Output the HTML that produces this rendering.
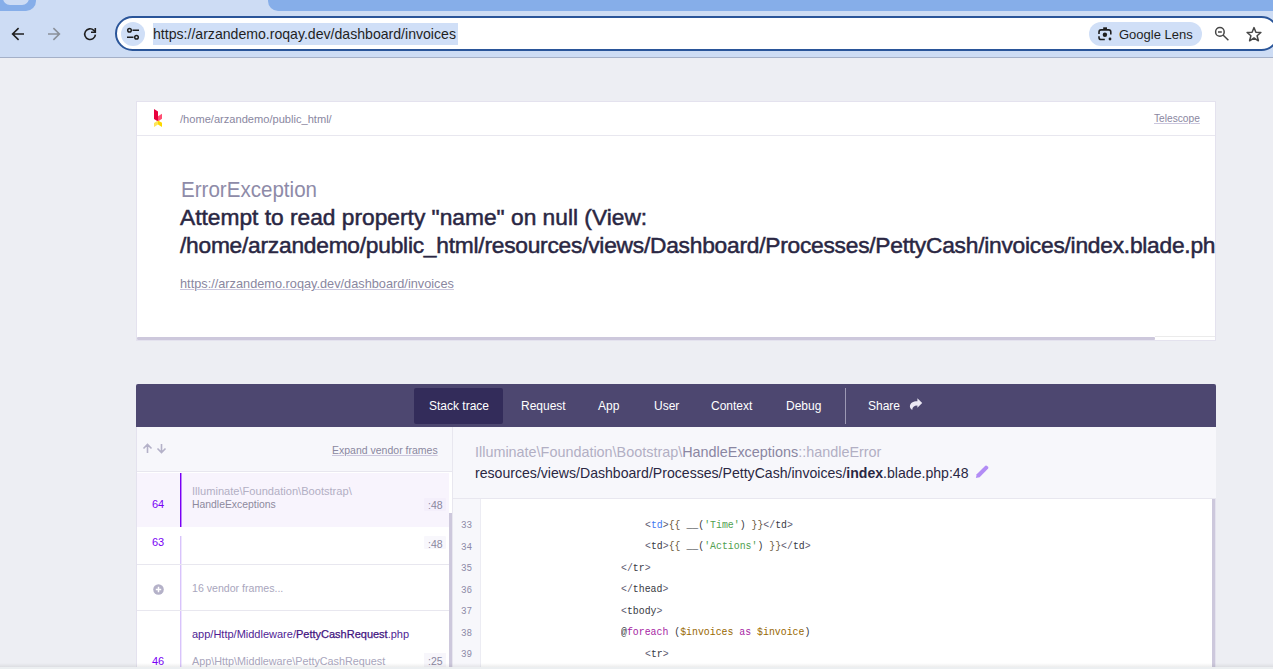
<!DOCTYPE html>
<html><head><meta charset="utf-8">
<style>
*{margin:0;padding:0;box-sizing:border-box}
html,body{width:1273px;height:669px;overflow:hidden;background:#edeef3;font-family:"Liberation Sans",sans-serif}
.a{position:absolute;white-space:pre;line-height:1}
.m{font-family:"Liberation Mono",monospace}
/* chrome */
#chrome{position:absolute;left:0;top:0;width:1273px;height:58px;background:#cddcf4;border-bottom:1px solid #a4b0c8}
.tabl{position:absolute;left:0;top:0;width:36px;height:10.7px;background:#86aee9;border-bottom-right-radius:10px}
.tabl i{position:absolute;left:3px;top:-9px;width:26px;height:14px;background:#cddcf4;border-radius:7px}
.tabr{position:absolute;left:268px;top:0;width:1010px;height:11px;background:#86aee9;border-bottom-left-radius:10px}
#omni{position:absolute;left:115px;top:16px;width:1164px;height:35px;border:2px solid #2a5599;border-radius:18px;background:#fff}
.card{position:absolute;left:136px;width:1080px;background:#fff;border:1px solid #e4e2ee}
</style></head><body>

<div id="chrome">
  <div class="tabl"><i></i></div>
  <div class="tabr"></div>
  <!-- back -->
  <svg class="a" style="left:11px;top:27px" width="14" height="14" viewBox="0 0 14 14"><path d="M13 7H1.6M7.6 1.1L1.6 7l6 5.9" fill="none" stroke="#1f1f1f" stroke-width="1.6"/></svg>
  <svg class="a" style="left:47px;top:27px" width="14" height="14" viewBox="0 0 14 14"><path d="M1 7h11.4M6.4 1.1l6 5.9-6 5.9" fill="none" stroke="#8a9099" stroke-width="1.6"/></svg>
  <svg class="a" style="left:82px;top:26px" width="16" height="16" viewBox="0 0 16 16"><path d="M13.4 8.6A5.35 5.35 0 1 1 11.78 4.32L13.1 5.8" fill="none" stroke="#1f1f1f" stroke-width="1.6"/><path d="M9 6.3H13.3V2" fill="none" stroke="#1f1f1f" stroke-width="1.6"/></svg>
  <div id="omni"></div>
  <div class="a" style="left:121px;top:22px;width:24px;height:24px;border-radius:12px;background:#d0dff7"></div>
  <svg class="a" style="left:126px;top:27px" width="14" height="14" viewBox="0 0 14 14"><g fill="none" stroke="#1f1f1f" stroke-width="1.5"><circle cx="3.5" cy="3.2" r="1.8"/><path d="M6.5 3.2H13M1 10.3h6.5"/><circle cx="10.5" cy="10.3" r="1.8"/></g></svg>
  <div class="a" style="left:153px;top:23px;width:305px;height:22px;background:#d0dff7"></div>
  <div class="a" style="left:153px;top:27px;font-size:14.1px;color:#1f1f1f">https://arzandemo.roqay.dev/dashboard/invoices</div>
  <div class="a" style="left:1089px;top:22px;width:113px;height:24px;border-radius:12px;background:#d0dff7"></div>
  <svg class="a" style="left:1094px;top:24px" width="22" height="20" viewBox="0 0 22 20"><g fill="none" stroke="#1f1f1f" stroke-width="1.6"><path d="M5 10V8Q5 5.9 7.1 5.9H14.7Q16.8 5.9 16.8 8V10.5M5 12.2V13.4Q5 15.5 7.1 15.5H10.8"/></g><rect x="9.2" y="3.3" width="3.8" height="2.6" fill="#1f1f1f"/><circle cx="10.9" cy="10.8" r="2.2" fill="#1f1f1f"/><circle cx="16" cy="15" r="1.4" fill="#1f1f1f"/></svg>
  <div class="a" style="left:1119px;top:28px;font-size:13px;color:#1f1f1f">Google Lens</div>
  <svg class="a" style="left:1210px;top:22px" width="24" height="24" viewBox="0 0 24 24"><g fill="none" stroke="#474747" stroke-width="1.5"><circle cx="9.9" cy="9.9" r="4.3"/><path d="M8 9.9h3.8M13 13l5.4 5.2"/></g></svg>
  <svg class="a" style="left:1240px;top:22px" width="28" height="24" viewBox="0 0 28 24"><path d="M14 5.6l1.9 4.6 5 .3-3.8 3.3 1.3 5L14 16l-4.4 2.8 1.3-5-3.8-3.3 5-.3z" fill="none" stroke="#474747" stroke-width="1.5" stroke-linejoin="round"/></svg>
</div>

<!-- card 1 -->
<div class="card" style="top:101px;height:240px"></div>
<div class="a" style="left:137px;top:135px;width:1078px;height:1px;background:#e8e7ef"></div>
<svg class="a" style="left:153px;top:108px" width="10" height="20" viewBox="0 0 10 20"><path d="M1 1l4 2.4v10L1 11z" fill="#e8003c"/><path d="M5 13.4l4-2.6V5.8L5 8.2z" fill="#ff4f73"/><path d="M1 19l4-2.4V12.6L1 15z" fill="#fde55a"/><path d="M5 16.6L9 19v-4.2l-4-2.2z" fill="#fdd800"/></svg>
<div class="a" style="left:180px;top:114px;font-size:11.1px;color:#8a879f">/home/arzandemo/public_html/</div>
<div class="a" style="left:1154px;top:114px;font-size:10.2px;color:#8a879f;text-decoration:underline;text-decoration-color:#cac6dd">Telescope</div>
<div class="a" style="left:181px;top:179px;font-size:22.5px;color:#8e8ba8;transform:scaleX(0.914);transform-origin:0 0">ErrorException</div>
<div class="a" style="left:180px;top:207px;font-size:22.5px;color:#2a2743;-webkit-text-stroke:0.5px #2a2743;transform:scaleX(1.011);transform-origin:0 0">Attempt to read property "name" on null (View:</div>
<div class="a" style="left:137px;top:230px;width:1078px;height:30px;overflow:hidden"><div class="a" style="left:43px;top:5px;font-size:22.5px;color:#2a2743;-webkit-text-stroke:0.5px #2a2743;letter-spacing:-0.235px;transform:scaleX(1.011);transform-origin:0 0">/home/arzandemo/public_html/resources/views/Dashboard/Processes/PettyCash/invoices/index.blade.php:48)</div></div>
<div class="a" style="left:180px;top:277px;font-size:13.5px;color:#8a879f;text-decoration:underline;text-decoration-color:#cac6dd;transform:scaleX(0.944);transform-origin:0 0">https://arzandemo.roqay.dev/dashboard/invoices</div>
<div class="a" style="left:1155px;top:336px;width:60px;height:1px;background:#ebebeb"></div><div class="a" style="left:137px;top:337px;width:1018px;height:3px;background:#cdc8dc;border-radius:1px"></div>

<!-- card 2 -->
<div class="a" style="left:136px;top:384px;width:1080px;height:290px;background:#fff;border:1px solid #e4e2ee"></div>
<div class="a" style="left:136px;top:384px;width:1080px;height:43px;background:#4d4770;border-radius:2px 2px 0 0"></div>
<div class="a" style="left:414px;top:388px;width:89px;height:36px;background:#332c5a;border-radius:2px"></div>
<div class="a" style="left:429px;top:400px;font-size:12px;color:#fff">Stack trace</div>
<div class="a" style="left:521px;top:400px;font-size:12px;color:#fff">Request</div>
<div class="a" style="left:598px;top:400px;font-size:12px;color:#fff">App</div>
<div class="a" style="left:654px;top:400px;font-size:12px;color:#fff">User</div>
<div class="a" style="left:711px;top:400px;font-size:12px;color:#fff">Context</div>
<div class="a" style="left:786px;top:400px;font-size:12px;color:#fff">Debug</div>
<div class="a" style="left:845px;top:388px;width:1px;height:36px;background:#9d99b4"></div>
<div class="a" style="left:868px;top:400px;font-size:12px;color:#fff">Share</div>
<svg class="a" style="left:905px;top:394px" width="22" height="20" viewBox="0 0 22 20"><path d="M17.2 9L12.4 4.2V7.2C8 7.2 5 9 4.9 12.5C4.9 14 6 15.2 7.2 15.9C7.4 13 9 11.4 12.4 11.4V13.8Z" fill="#ece9f5"/></svg>

<!-- left panel -->
<div class="a" style="left:136px;top:427px;width:1px;height:242px;background:#e4e2ee"></div>
<div class="a" style="left:137px;top:427px;width:315px;height:45px;background:#f7f7fb;border-bottom:1px solid #e8e7ef"></div>
<svg class="a" style="left:142px;top:443px" width="25" height="11" viewBox="0 0 25 11"><g fill="none" stroke="#b4b1c8" stroke-width="1.6"><path d="M5.5 10V1.5M1.5 5.5l4-4 4 4M19.5 1v9M15.5 5.5l4 4 4-4"/></g></svg>
<div class="a" style="left:332px;top:445px;font-size:10.5px;color:#8a879f;text-decoration:underline;text-decoration-color:#cac6dd">Expand vendor frames</div>
<div class="a" style="left:452px;top:427px;width:1px;height:242px;background:#e8e7ef"></div>

<!-- frames -->
<div class="a" style="left:137px;top:473px;width:312px;height:54px;background:#f8f4fd"></div>
<div class="a" style="left:180px;top:473px;width:1px;height:54px;background:#7900f5"></div><div class="a" style="left:181px;top:473px;width:1px;height:54px;background:rgba(121,0,245,0.45)"></div>
<div class="a" style="left:152px;top:499px;font-size:11px;color:#7900f5">64</div>
<div class="a" style="left:192px;top:486px;font-size:11.1px;color:#b2afc4">Illuminate\Foundation\Bootstrap\</div>
<div class="a" style="left:192px;top:500px;font-size:10.4px;color:#8d8a9e">HandleExceptions</div>
<div class="a" style="left:424px;top:498px;width:22px;height:13px;background:#f4effb;border-radius:1px"></div>
<div class="a" style="left:428px;top:500px;font-size:10.5px;color:#8a879f">:48</div>

<div class="a" style="left:152px;top:537px;font-size:11px;color:#7900f5">63</div>
<div class="a" style="left:180px;top:536px;width:1px;height:133px;background:#d8c3fb"></div><div class="a" style="left:181px;top:536px;width:1px;height:133px;background:#efe6fd"></div>
<div class="a" style="left:424px;top:536px;width:22px;height:13px;background:#f8f7fc;border-radius:1px"></div>
<div class="a" style="left:428px;top:539px;font-size:10.5px;color:#8a879f">:48</div>
<div class="a" style="left:137px;top:564px;width:312px;height:1px;background:#e8e7ef"></div>

<svg class="a" style="left:153px;top:584px" width="11" height="11" viewBox="0 0 11 11"><circle cx="5.5" cy="5.5" r="5.3" fill="#b4b1c8"/><path d="M5.5 2.8v5.4M2.8 5.5h5.4" stroke="#fff" stroke-width="1.5"/></svg>
<div class="a" style="left:192px;top:583px;font-size:10.6px;color:#a9a6bd">16 vendor frames...</div>
<div class="a" style="left:137px;top:610px;width:312px;height:1px;background:#e8e7ef"></div>

<div class="a" style="left:192px;top:629px;font-size:11px;color:#4f1d94">app/Http/Middleware/<span style="color:#42137f;-webkit-text-stroke:0.25px #42137f">PettyCashRequest</span>.php</div>
<div class="a" style="left:152px;top:656px;font-size:11px;color:#7900f5">46</div>
<div class="a" style="left:192px;top:656px;font-size:10.8px;color:#a9a6bd">App\Http\Middleware\PettyCashRequest</div>
<div class="a" style="left:424px;top:653px;width:22px;height:14px;background:#f7f6fb"></div>
<div class="a" style="left:428px;top:656px;font-size:10.5px;color:#8a879f">:25</div>
<div class="a" style="left:449px;top:513px;width:3px;height:156px;background:#cdc8dc"></div>

<!-- right panel -->
<div class="a" style="left:453px;top:427px;width:763px;height:72px;background:#f7f7fb;border-bottom:1px solid #e8e7ef"></div>
<div class="a" style="left:475px;top:445px;font-size:14.4px;color:#b2afc4">Illuminate\Foundation\Bootstrap\<span style="color:#8a86a2">HandleExceptions</span>::handleError</div>
<div class="a" style="left:475px;top:466px;font-size:14.1px;color:#2a2743">resources/views/Dashboard/Processes/PettyCash/invoices/<b>index</b>.blade.php:48</div>
<svg class="a" style="left:972px;top:462px" width="20" height="20" viewBox="0 0 20 20"><path d="M3.9 16L4.7 12.3L12.3 4.7L13.3 3.8Q14.2 3.1 15.1 3.9L16 4.8Q16.8 5.7 16.1 6.6L15.2 7.6L7.6 15.2Z" fill="#b28cf5"/></svg>
<div class="a" style="left:453px;top:499px;width:28px;height:170px;background:#f7f7fb"></div>
<div class="a" style="left:1212px;top:499px;width:3px;height:170px;background:#cdc8dc"></div>

<style>.code{font-family:"Liberation Mono",monospace;font-size:11.2px;color:#383a42;transform:scaleX(0.881);transform-origin:0 0}.p{color:#5c5a70}.br{color:#6b5a3a}.s{color:#50a14f}.k{color:#a626a4}.v{color:#986801}.ln{font-family:"Liberation Mono",monospace;font-size:10.8px;color:#8e8ba8;transform:scaleX(0.86);transform-origin:0 0}</style>
<div class="a" style="left:480px;top:499px;width:1px;height:170px;background:#ececf3"></div>
<div class="a ln" style="left:461px;top:520.2px">33</div>
<div class="a code" style="left:645px;top:519.9px"><span class=p>&lt;</span><span style="color:#4078f2">td</span><span class=p>&gt;</span><span class=br>{{</span> __(<span class=s>'Time'</span>) <span class=br>}}</span><span class=p>&lt;/</span>td<span class=p>&gt;</span></div>
<div class="a ln" style="left:461px;top:541.7px">34</div>
<div class="a code" style="left:645px;top:541.4px"><span class=p>&lt;</span>td<span class=p>&gt;</span><span class=br>{{</span> __(<span class=s>'Actions'</span>) <span class=br>}}</span><span class=p>&lt;/</span>td<span class=p>&gt;</span></div>
<div class="a ln" style="left:461px;top:563.2px">35</div>
<div class="a code" style="left:621px;top:562.9px"><span class=p>&lt;/</span>tr<span class=p>&gt;</span></div>
<div class="a ln" style="left:461px;top:584.7px">36</div>
<div class="a code" style="left:621px;top:584.4px"><span class=p>&lt;/</span>thead<span class=p>&gt;</span></div>
<div class="a ln" style="left:461px;top:606.2px">37</div>
<div class="a code" style="left:621px;top:605.9px"><span class=p>&lt;</span>tbody<span class=p>&gt;</span></div>
<div class="a ln" style="left:461px;top:627.7px">38</div>
<div class="a code" style="left:621px;top:627.4px">@<span class=k>foreach</span> (<span class=v>$invoices</span> <span class=k>as</span> <span class=v>$invoice</span>)</div>
<div class="a ln" style="left:461px;top:649.2px">39</div>
<div class="a code" style="left:645px;top:648.9px"><span class=p>&lt;</span>tr<span class=p>&gt;</span></div>
<div class="a" style="left:0;top:663px;width:1273px;height:4px;background:linear-gradient(rgba(0,0,0,0),rgba(0,0,0,0.07))"></div><div class="a" style="left:0;top:666.5px;width:1273px;height:3px;background:#eceff1"></div>
</body></html>
